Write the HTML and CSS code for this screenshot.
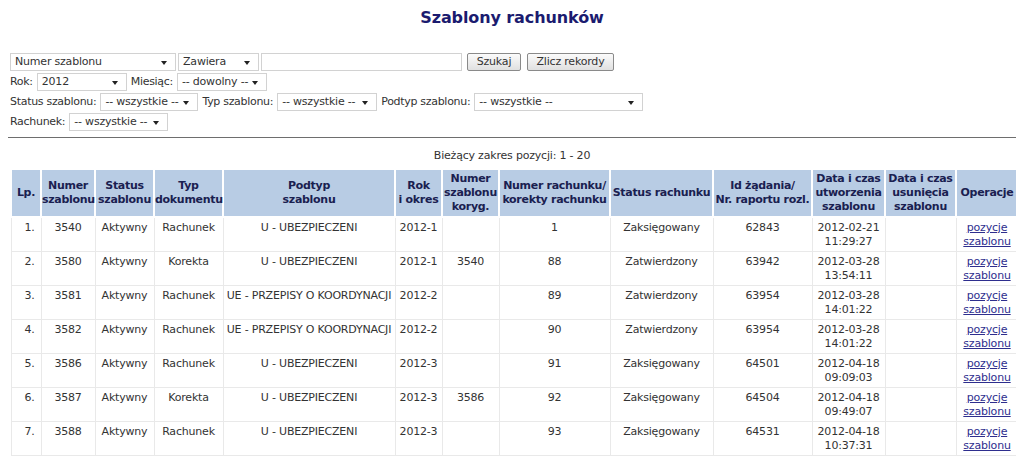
FILE: index.html
```html
<!DOCTYPE html>
<html lang="pl">
<head>
<meta charset="utf-8">
<title>Szablony rachunków</title>
<link rel="stylesheet" href="styles.css">
</head>
<body>
<h1 class="title">Szablony rachunków</h1>

<form class="filters">
  <div class="frow first">
    <span class="sel w166"><select><option>Numer szablonu</option></select></span>
    <span class="sel w81"><select><option>Zawiera</option></select></span>
    <input class="txt" type="text">
    <button type="button" class="btn b-szukaj">Szukaj</button>
    <button type="button" class="btn b-zlicz">Zlicz rekordy</button>
  </div>
  <div class="frow">
    <label>Rok:</label>
    <span class="sel w90"><select><option>2012</option></select></span>
    <label>Miesiąc:</label>
    <span class="sel w90"><select><option>-- dowolny --</option></select></span>
  </div>
  <div class="frow">
    <label>Status szablonu:</label>
    <span class="sel w98"><select><option>-- wszystkie --</option></select></span>
    <label>Typ szablonu:</label>
    <span class="sel w100"><select><option>-- wszystkie --</option></select></span>
    <label>Podtyp szablonu:</label>
    <span class="sel w169"><select><option>-- wszystkie --</option></select></span>
  </div>
  <div class="frow">
    <label>Rachunek:</label>
    <span class="sel w99"><select><option>-- wszystkie --</option></select></span>
  </div>
</form>

<hr class="sep">

<div class="range">Bieżący zakres pozycji: 1 - 20</div>

<table class="grid">
  <colgroup>
    <col class="c-lp"><col class="c-nr"><col class="c-st"><col class="c-typ"><col class="c-pod"><col class="c-rok"><col class="c-kor"><col class="c-rach"><col class="c-srach"><col class="c-id"><col class="c-du"><col class="c-dd"><col class="c-op">
  </colgroup>
  <thead>
    <tr>
      <th>Lp.</th>
      <th>Numer szablonu</th>
      <th>Status szablonu</th>
      <th>Typ dokumentu</th>
      <th>Podtyp<br>szablonu</th>
      <th>Rok<br>i okres</th>
      <th>Numer szablonu koryg.</th>
      <th>Numer rachunku/<br>korekty rachunku</th>
      <th>Status rachunku</th>
      <th>Id żądania/<br>Nr. raportu rozl.</th>
      <th>Data i czas utworzenia szablonu</th>
      <th>Data i czas usunięcia szablonu</th>
      <th>Operacje</th>
    </tr>
  </thead>
  <tbody>
    <tr>
      <td class="r">1.</td><td>3540</td><td>Aktywny</td><td>Rachunek</td><td>U - UBEZPIECZENI</td><td>2012-1</td><td></td><td>1</td><td>Zaksięgowany</td><td>62843</td><td>2012-02-21<br>11:29:27</td><td></td><td><a href="#">pozycje<br>szablonu</a></td>
    </tr>
    <tr>
      <td class="r">2.</td><td>3580</td><td>Aktywny</td><td>Korekta</td><td>U - UBEZPIECZENI</td><td>2012-1</td><td>3540</td><td>88</td><td>Zatwierdzony</td><td>63942</td><td>2012-03-28<br>13:54:11</td><td></td><td><a href="#">pozycje<br>szablonu</a></td>
    </tr>
    <tr>
      <td class="r">3.</td><td>3581</td><td>Aktywny</td><td>Rachunek</td><td>UE - PRZEPISY O KOORDYNACJI</td><td>2012-2</td><td></td><td>89</td><td>Zatwierdzony</td><td>63954</td><td>2012-03-28<br>14:01:22</td><td></td><td><a href="#">pozycje<br>szablonu</a></td>
    </tr>
    <tr>
      <td class="r">4.</td><td>3582</td><td>Aktywny</td><td>Rachunek</td><td>UE - PRZEPISY O KOORDYNACJI</td><td>2012-2</td><td></td><td>90</td><td>Zatwierdzony</td><td>63954</td><td>2012-03-28<br>14:01:22</td><td></td><td><a href="#">pozycje<br>szablonu</a></td>
    </tr>
    <tr>
      <td class="r">5.</td><td>3586</td><td>Aktywny</td><td>Rachunek</td><td>U - UBEZPIECZENI</td><td>2012-3</td><td></td><td>91</td><td>Zaksięgowany</td><td>64501</td><td>2012-04-18<br>09:09:03</td><td></td><td><a href="#">pozycje<br>szablonu</a></td>
    </tr>
    <tr>
      <td class="r">6.</td><td>3587</td><td>Aktywny</td><td>Korekta</td><td>U - UBEZPIECZENI</td><td>2012-3</td><td>3586</td><td>92</td><td>Zaksięgowany</td><td>64504</td><td>2012-04-18<br>09:49:07</td><td></td><td><a href="#">pozycje<br>szablonu</a></td>
    </tr>
    <tr>
      <td class="r">7.</td><td>3588</td><td>Aktywny</td><td>Rachunek</td><td>U - UBEZPIECZENI</td><td>2012-3</td><td></td><td>93</td><td>Zaksięgowany</td><td>64531</td><td>2012-04-18<br>10:37:31</td><td></td><td><a href="#">pozycje<br>szablonu</a></td>
    </tr>
  </tbody>
</table>
</body>
</html>
```

FILE: styles.css
```css
html, body {
  background: #ffffff;
}
body {
  margin: 8px;
  font-family: "DejaVu Sans", Verdana, sans-serif;
  font-size: 11px;
  letter-spacing: -0.2px;
  color: #333333;
}

.title {
  margin: 0 0 24px 0;
  text-align: center;
  font-size: 16px;
  line-height: 20px;
  font-weight: bold;
  letter-spacing: -0.1px;
  color: #1b1b6f;
}

.filters {
  display: flex;
  flex-direction: column;
  gap: 1px;
  padding-left: 2px;
}
.frow {
  display: flex;
  align-items: center;
  gap: 4px;
  height: 19px;
}
.frow.first {
  gap: 2px;
}
.frow label {
  color: #333333;
  white-space: nowrap;
  letter-spacing: -0.3px;
}

.sel {
  position: relative;
  display: inline-block;
  height: 18px;
}
.sel select {
  -webkit-appearance: none;
  appearance: none;
  width: 100%;
  height: 18px;
  margin: 0;
  padding: 0 14px 0 4px;
  border: 1px solid #d2d2d2;
  border-radius: 0;
  background: #ffffff;
  font-family: "DejaVu Sans", Verdana, sans-serif;
  font-size: 11px;
  letter-spacing: -0.2px;
  color: #333333;
  line-height: 16px;
}
.sel::after {
  content: "";
  position: absolute;
  right: 9px;
  top: 8px;
  border-left: 3px solid transparent;
  border-right: 3px solid transparent;
  border-top: 4px solid #222222;
  pointer-events: none;
}
.w81 { width: 81px; }
.w90 { width: 90px; }
.w98 { width: 98px; }
.w99 { width: 99px; }
.w100 { width: 100px; }
.w166 { width: 166px; }
.w169 { width: 169px; }

.txt {
  width: 201px;
  height: 18px;
  box-sizing: border-box;
  margin: 0;
  border: 1px solid #d2d2d2;
  padding: 0 3px;
}

.btn {
  height: 18px;
  box-sizing: border-box;
  margin: 0;
  padding: 0 4px;
  border: 1px solid #8a8a8a;
  border-radius: 2px;
  background: linear-gradient(#fbfbfb, #e0e0e0);
  font-family: "DejaVu Sans", Verdana, sans-serif;
  font-size: 11px;
  letter-spacing: -0.2px;
  color: #333333;
  line-height: 14px;
}
.b-szukaj { width: 54px; margin-left: 3px; }
.b-zlicz { width: 87px; margin-left: 4px; }

.sep {
  margin: 6px 0 0 0;
  height: 0;
  border: 0;
  border-top: 1px solid #6e6e6e;
}

.range {
  margin-top: 11px;
  text-align: center;
  line-height: 14px;
  color: #333333;
}

.grid {
  margin: 5px 0 0 2px;
  width: 1007px;
  table-layout: fixed;
  border-collapse: collapse;
}
.grid th,
.grid td {
  box-sizing: border-box;
}
.grid th {
  background: #b8cce4;
  color: #1a2050;
  font-weight: bold;
  font-size: 11px;
  letter-spacing: -0.3px;
  line-height: 14px;
  padding: 1px 0;
  border: 2px solid #ffffff;
  text-align: center;
  vertical-align: middle;
  height: 48px;
}
.grid td {
  border: 1px solid #e9e9e9;
  padding: 3px 2px 2px 2px;
  line-height: 14px;
  height: 34px;
  text-align: center;
  vertical-align: top;
  white-space: nowrap;
  overflow: hidden;
}
.grid td.r {
  text-align: right;
  padding-right: 6px;
}
.grid a {
  color: #2e2e8e;
  text-decoration: underline;
}

.c-lp { width: 30px; }
.c-nr { width: 54px; }
.c-st { width: 59px; }
.c-typ { width: 69px; }
.c-pod { width: 172px; }
.c-rok { width: 47px; }
.c-kor { width: 57px; }
.c-rach { width: 111px; }
.c-srach { width: 103px; }
.c-id { width: 99px; }
.c-du { width: 73px; }
.c-dd { width: 71px; }
.c-op { width: 62px; }
```
